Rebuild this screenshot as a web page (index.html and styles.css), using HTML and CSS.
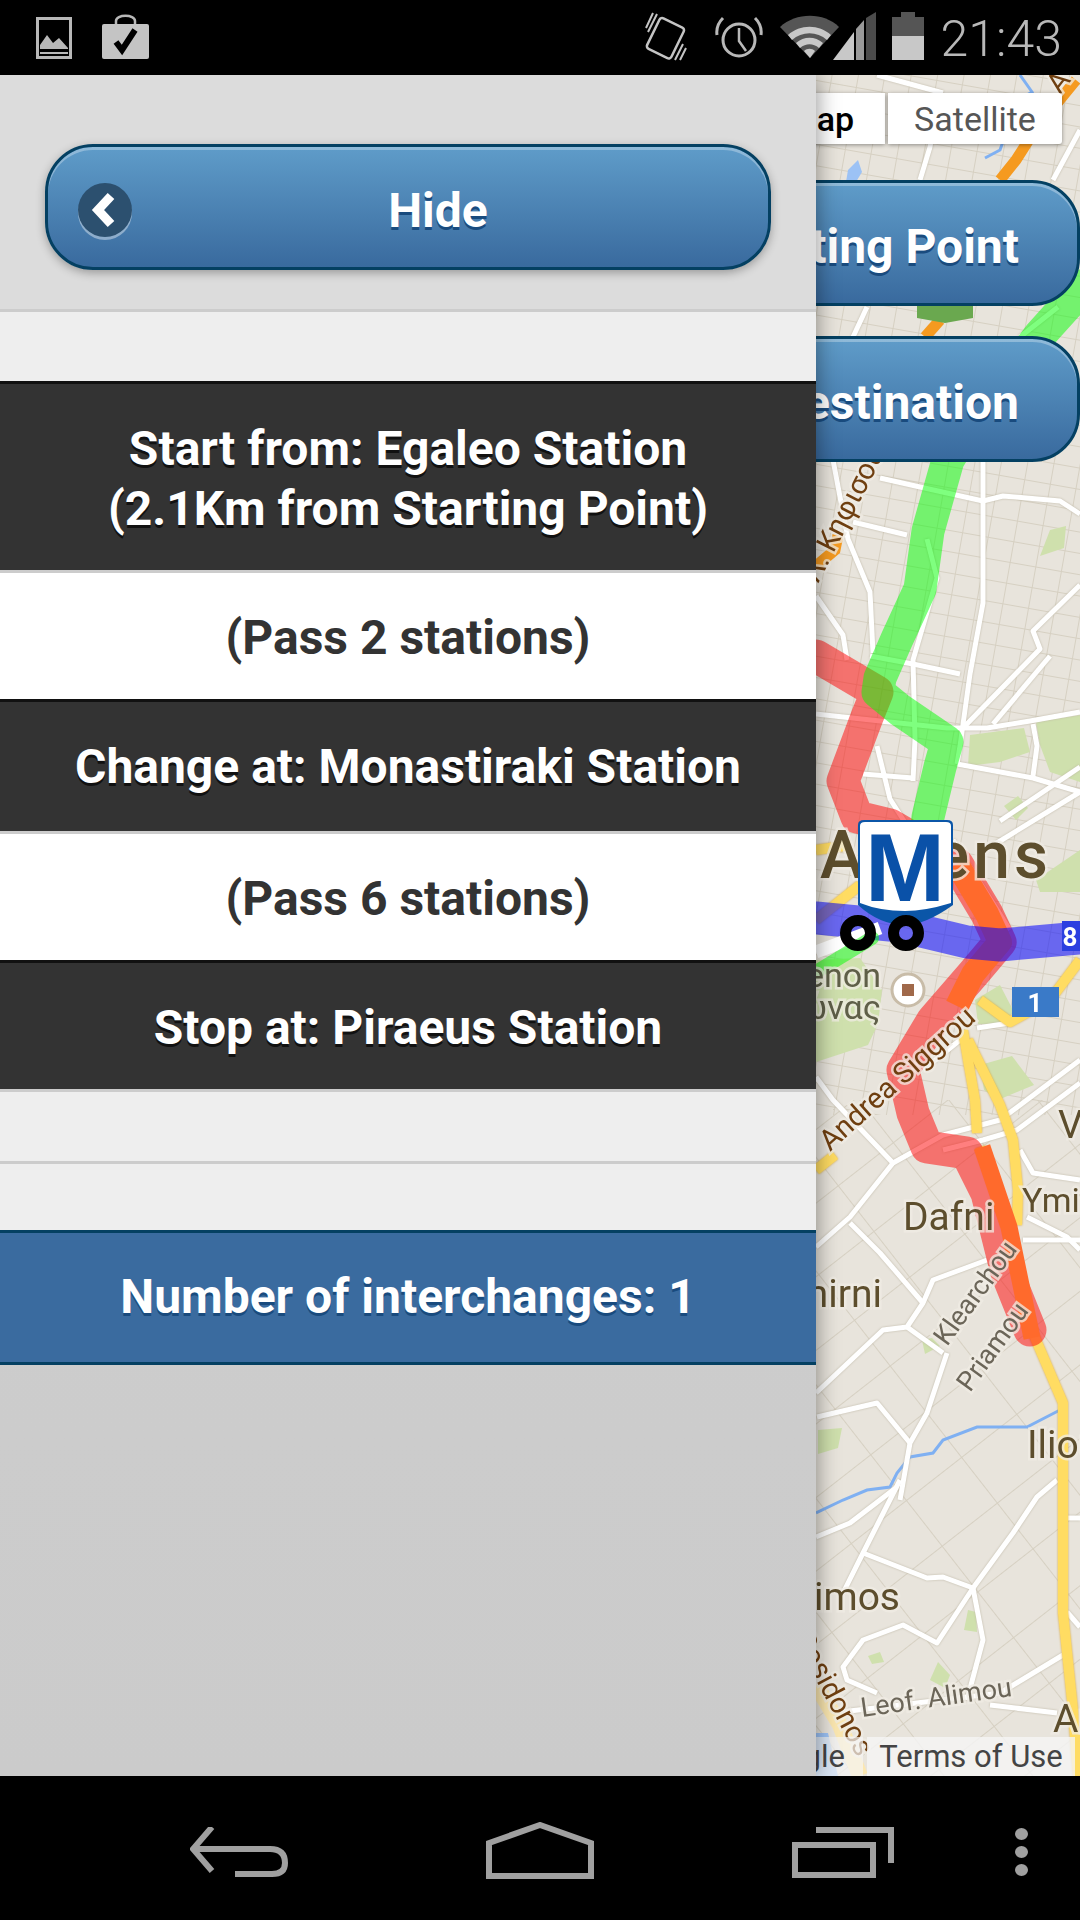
FILE: index.html
```html
<!DOCTYPE html>
<html lang="en">
<head>
    <meta charset="UTF-8">
    <meta name="viewport" content="width=device-width, initial-scale=1.0">
    <title>Metro Route</title>
    <link rel="stylesheet" href="styles.css">
</head>
<body>
    <div class="status-bar">
        <div class="status-left">
            <svg width="36" height="42" viewBox="0 0 36 42"><rect x="1.5" y="1.5" width="33" height="39" fill="none" stroke="#b8b8b8" stroke-width="3"/><rect x="5" y="8" width="26" height="26" fill="#000"/><path d="M4 32V28L11 18L17 26L23 21L32 31V32Z" fill="#b8b8b8"/><rect x="4" y="35" width="28" height="2" fill="#b8b8b8"/></svg>
            <svg width="47" height="46" viewBox="0 0 47 46"><path d="M14 12V8C14 1 33 1 33 8V12" fill="none" stroke="#b8b8b8" stroke-width="2.5"/><rect x="0" y="11" width="47" height="35" rx="2" fill="#c4c4c4"/><path d="M14 29L20 37L33 17" fill="none" stroke="#000" stroke-width="6"/></svg>
        </div>
        <div class="status-right">
            <svg width="42" height="50" viewBox="0 0 42 50"><g fill="none" stroke="#c4c4c4"><rect x="7" y="9" width="27" height="34" rx="3" stroke-width="2.5" transform="rotate(26 20 26)"/><path d="M12 2L3 20M8 1L1 16M30 48L38 32M35 48L41 36" stroke-width="2"/></g></svg>
            <svg width="48" height="46" viewBox="0 0 48 46"><g fill="none" stroke="#b8b8b8"><circle cx="24" cy="25" r="16" stroke-width="3"/><path d="M24 13V26L31 36" stroke-width="2.5"/><path d="M8 3C3 8 1 13 2 20M40 3C45 8 47 13 46 20" stroke-width="3"/></g></svg>
            <svg class="wifi-signal" width="96" height="48" viewBox="0 0 96 48"><path d="M0 15C16 0 44 0 59 15L30 46Z" fill="#555"/><path d="M8 23C20 12 39 12 51 23L47 28C37 19 22 19 12 28Z" fill="#c8c8c8"/><path d="M16 31C24 24 35 24 43 31L39 36C33 31 26 31 20 36Z" fill="#c8c8c8"/><path d="M24 39C27 36 32 36 35 39L30 46Z" fill="#c8c8c8"/><path d="M53 48L74 20V48Z" fill="#c8c8c8"/><path d="M76 17L84 8V48H76Z" fill="#9a9a9a"/><path d="M86 6L96 0V48H86Z" fill="#4c4c4c"/></svg>
            <svg width="32" height="48" viewBox="0 0 32 48"><rect x="9" y="0" width="14" height="6" fill="#555"/><rect x="0" y="5" width="32" height="19" fill="#555"/><rect x="0" y="24" width="32" height="24" fill="#c8c8c8"/></svg>
            <span class="clock">21:43</span>
        </div>
    </div>

    <div class="app">
        <div class="map">
            <svg class="map-canvas" width="264" height="1701" viewBox="816 75 264 1701">
                <defs>
                    <pattern id="streets" width="26" height="21" patternUnits="userSpaceOnUse" patternTransform="rotate(10)">
                        <path d="M0 0H26M0 0V21" fill="none" stroke="#d6d0c2" stroke-width="2"/>
                    </pattern>
                    <pattern id="streetsWide" width="70" height="58" patternUnits="userSpaceOnUse" patternTransform="rotate(-38)">
                        <path d="M0 0H70M0 0V58" fill="none" stroke="#d6d0c2" stroke-width="2"/>
                    </pattern>
                </defs>
                <rect x="816" y="75" width="264" height="1701" fill="#e8e4dc"/>
                <rect x="816" y="75" width="264" height="1040" fill="url(#streets)"/>
                <rect x="816" y="1100" width="264" height="676" fill="url(#streetsWide)"/>

                <!-- parks -->
                <g class="park">
                    <path d="M970 735L1024 728L1030 752L1000 762L968 766Z"/>
                    <path d="M1036 722L1080 715V782L1050 772L1040 745Z"/>
                    <path d="M1004 806L1018 796L1028 808L1016 820Z"/>
                    <path d="M1040 556L1050 530L1066 526L1064 548Z"/>
                    <path d="M1036 880L1080 850V892H1040Z"/>
                    <path d="M816 960L860 958L882 990L878 1024L816 1024Z"/>
                    <path d="M975 1000L1000 985L1014 1012L1000 1024L978 1024Z"/>
                    <path d="M816 1020H880L868 1045L816 1062Z"/>
                    <path d="M980 1065L1012 1056L1034 1085L998 1100L984 1090Z"/>
                    <path d="M818 1430L842 1428L838 1448L818 1454Z"/>
                    <path d="M930 1680L938 1662L950 1675L945 1688Z"/>
                    <path d="M964 1630L968 1610L976 1612L977 1632Z"/>
                    <path d="M868 1656L880 1652L884 1662L872 1664Z"/>
                    <path d="M922 1340L932 1338L940 1346L925 1354Z"/>
                </g>

                <!-- water -->
                <path class="water-blob" d="M846 182L848 170L858 160L862 172L856 182Z"/>
                <path class="water-blob" d="M816 1733H828L838 1776H816Z"/>
                <polyline class="river" points="1060,1410 1027,1427 977,1427 943,1440 933,1453 910,1457 897,1473 890,1487 867,1490 843,1500 816,1513"/>
                <polyline class="river" points="1020,75 1032,92 1018,100 1000,150 985,158"/>

                <!-- roads -->
                <g class="road">
                    <polyline points="877,75 943,93"/>
                    <polyline points="920,180 930,147 940,90"/>
                    <polyline points="1080,130 1053,180"/>
                    <polyline points="867,307 853,337"/>
                    <polyline points="1058,307 1020,337"/>
                    <polyline points="880,478 920,487 983,501 1003,496 1060,501 1080,514"/>
                    <polyline points="983,460 983,603 970,674 960,746 957,764"/>
                    <polyline points="853,522 907,535"/>
                    <polyline points="927,539 937,578 913,660 915,739 913,781"/>
                    <polyline points="833,460 848,539 870,592 873,653"/>
                    <polyline points="816,596 843,635 847,660"/>
                    <polyline points="870,656 913,664 960,674"/>
                    <polyline points="816,714 880,721 947,728 987,728 1030,721 1080,712"/>
                    <polyline points="957,764 1033,778 1080,792"/>
                    <polyline points="963,728 1040,649 1033,631 1080,585"/>
                    <polyline points="993,724 1050,656"/>
                    <polyline points="1033,724 1037,746 1033,776"/>
                    <polyline points="863,774 913,778"/>
                    <polyline points="877,746 890,799 913,835"/>
                    <polyline points="1000,821 1080,767"/>
                    <polyline points="987,849 1080,792"/>
                    <polyline points="953,840 1010,930"/>
                    <polyline points="816,1247 850,1217 893,1163 943,1135 1000,1120 1080,1060"/>
                    <polyline points="943,1150 983,1140 1017,1130 1080,1083"/>
                    <polyline points="850,1223 880,1253 923,1303"/>
                    <polyline points="816,1393 883,1330 907,1327 923,1303 933,1280 987,1260"/>
                    <polyline points="907,1327 943,1353"/>
                    <polyline points="947,1353 927,1413 910,1443 900,1500"/>
                    <polyline points="817,1417 877,1403 910,1443"/>
                    <polyline points="816,1077 833,1100 893,1163"/>
                    <polyline points="1020,1150 1033,1173 1080,1180"/>
                    <polyline points="1023,1240 1080,1240"/>
                    <polyline points="1027,1217 1067,1237 1080,1250"/>
                    <polyline points="977,1028 1010,1023"/>
                    <polyline points="960,1040 923,1070"/>
                    <polyline points="816,1537 850,1523 897,1487"/>
                    <polyline points="900,1480 863,1553 843,1593"/>
                    <polyline points="863,1553 927,1578 943,1577 973,1588"/>
                    <polyline points="1057,1480 1037,1497 1013,1533 973,1588 937,1643 903,1625 863,1640 843,1667 847,1680 877,1693"/>
                    <polyline points="973,1588 983,1640 967,1700"/>
                    <polyline points="833,1713 1000,1693 1063,1655"/>
                    <polyline points="990,1705 1057,1713"/>
                    <polyline points="1067,1612 1080,1627"/>
                    <polyline points="1067,1518 1080,1518"/>
                </g>

                <!-- highways -->
                <polyline class="coast-road" points="816,1685 840,1725 860,1776"/>
                <g class="highway-orange">
                    <polyline points="1000,180 1016,160 1035,130 1076,80"/>
                    <polyline points="925,337 940,320"/>
                    <polyline points="816,566 835,550 838,535"/>
                </g>
                <g class="highway-yellow">
                    <polyline points="816,850 850,845"/>
                    <polyline points="816,920 860,885"/>
                    <polyline points="980,1000 1010,1022 1050,1000 1080,960"/>
                    <polyline points="963,1030 968,1060 975,1100 977,1133"/>
                    <polyline points="968,1040 1000,1105 1013,1140 1018,1190 1017,1225"/>
                    <polyline points="980,1147 1007,1227 1033,1333 1063,1403 1063,1613 1073,1710 1078,1776"/>
                    <polyline points="816,1170 835,1155"/>
                </g>
                <path class="shield" d="M917 305H973V318L945 323L917 318Z"/>

                <!-- routes -->
                <polyline class="route route-red" points="816,656 877,692 867,717 843,781 857,817 890,825 957,864 987,914 1000,942 973,974 933,1020 903,1070 913,1113 927,1147 967,1153 987,1193 1007,1273 1030,1330"/>
                <polyline class="route-orange" points="957,864 987,914 1000,942 973,974 957,1006"/>
                <polyline class="route-orange route-orange-thin" points="982,1147 1009,1227 1032,1338"/>
                <polyline class="route route-blue" points="816,918 900,926 967,942 1000,945 1080,938"/>
                <polyline class="side-road" points="816,952 880,928"/>
                <polyline class="route route-green" points="1085,285 1040,335 960,440 948,460 928,531 920,589 897,639 880,678 878,692 900,710 947,742 940,767 928,817 925,850"/>
                <polyline class="route route-green-thin" points="816,972 872,938"/>

                <!-- labels -->
                <text class="label label-city" x="820" y="878">Athens</text>
                <text class="label label-town" x="903" y="1230">Dafni</text>
                <text class="label label-town label-narrow" x="1022" y="1212">Ymittos</text>
                <text class="label label-town" x="1058" y="1138">Vyronas</text>
                <text class="label label-town label-end" x="882" y="1307">Smirni</text>
                <text class="label label-town" x="1027" y="1458">Ilioupoli</text>
                <text class="label label-town label-end" x="900" y="1610">Alimos</text>
                <text class="label label-town" x="1053" y="1732">Argyroupoli</text>
                <text class="label label-suburb label-end" x="881" y="987">Parthenon</text>
                <text class="label label-suburb label-end" x="881" y="1019">Παρθενώνας</text>
                <text class="label label-street" transform="translate(862 1717) rotate(-8)">Leof. Alimou</text>
                <text class="label label-street" transform="translate(947 1347) rotate(-54)">Klearchou</text>
                <text class="label label-street" transform="translate(970 1393) rotate(-54)">Priamou</text>
                <text class="label label-road" transform="translate(830 1152) rotate(-42)">Andrea Siggrou</text>
                <text class="label label-road" transform="translate(818 584) rotate(-63)">Λ. Κηφισού</text>
                <text class="label label-road" transform="translate(1030 135) rotate(-52)">A</text>
                <text class="label label-road" transform="translate(1060 95) rotate(-52)">A</text>
                <text class="label label-road" transform="translate(793 1637) rotate(62)">Posidonos</text>

                <!-- highway signs and POI -->
                <rect x="1012" y="987" width="47" height="30" fill="#3a7ac8"/>
                <text class="sign-text" x="1035" y="1012">1</text>
                <rect x="1062" y="921" width="18" height="30" fill="#2c3fe0"/>
                <text class="sign-text" x="1070" y="946">8</text>
                <circle cx="908" cy="990" r="16" fill="#fff" stroke="#c8bca8" stroke-width="3"/>
                <rect x="902" y="984" width="12" height="12" fill="#a0694a"/>

                <!-- metro marker -->
                <g>
                    <path d="M858 905V825Q858 820 864 820H947Q953 820 953 825V905Q925 925 905 925Q880 925 858 905Z" fill="#0b56a8"/>
                    <path d="M860 903V826Q860 822 865 822H946Q951 822 951 826V903Q925 911 905 911Q880 911 860 903Z" fill="#fff"/>
                    <text class="marker-letter" x="905" y="901">M</text>
                    <circle cx="858" cy="933" r="12.5" class="marker-wheel"/>
                    <circle cx="906" cy="933" r="12.5" class="marker-wheel"/>
                </g>
            </svg>

            <div class="map-types">
                <div class="map-type map-type-active">Map</div>
                <div class="map-type">Satellite</div>
            </div>

            <div class="map-button map-button-start">Starting Point</div>
            <div class="map-button map-button-dest">Destination</div>

            <div class="map-footer">
                <span class="map-google">Google</span>
                <span class="map-terms">Terms of Use</span>
            </div>
        </div>

        <div class="panel">
            <div class="panel-header">
                <div class="hide-button">
                    <span class="hide-icon">
                        <svg width="30" height="36" viewBox="0 0 30 36"><path d="M21 4L8 18L21 32" fill="none" stroke="#fff" stroke-width="9"/></svg>
                    </span>
                    <span class="button-label">Hide</span>
                </div>
            </div>
            <div class="spacer spacer-top"></div>
            <div class="row row-dark row-first">Start from: Egaleo Station<br>(2.1Km from Starting Point)</div>
            <div class="row row-light">(Pass 2 stations)</div>
            <div class="row row-dark row-tall">Change at: Monastiraki Station</div>
            <div class="row row-light">(Pass 6 stations)</div>
            <div class="row row-dark">Stop at: Piraeus Station</div>
            <div class="spacer spacer-line"></div>
            <div class="spacer"></div>
            <div class="row row-blue">Number of interchanges: 1</div>
        </div>
    </div>

    <div class="nav-bar">
        <svg class="nav-back" width="100" height="50" viewBox="0 0 100 50"><path d="M22 0L3 22L22 44M3 22H80Q95 22 95 36Q95 47 82 47H45" fill="none" stroke="#a0a0a0" stroke-width="6"/></svg>
        <svg class="nav-home" width="108" height="58" viewBox="0 0 108 58"><path d="M3 54V21L54 3L105 21V54Z" fill="none" stroke="#a0a0a0" stroke-width="6"/></svg>
        <svg class="nav-recent" width="102" height="51" viewBox="0 0 102 51"><rect x="3" y="18" width="78" height="30" fill="none" stroke="#a0a0a0" stroke-width="6"/><path d="M24 3H99V36" fill="none" stroke="#a0a0a0" stroke-width="6"/></svg>
        <svg class="nav-menu" width="13" height="48" viewBox="0 0 13 48"><ellipse cx="6.5" cy="6" rx="6.5" ry="6" fill="#a0a0a0"/><ellipse cx="6.5" cy="24" rx="6.5" ry="6" fill="#a0a0a0"/><ellipse cx="6.5" cy="42" rx="6.5" ry="6" fill="#a0a0a0"/></svg>
    </div>
</body>
</html>
```
FILE: styles.css
```css
* {
    box-sizing: border-box;
}
html, body {
    margin: 0;
    padding: 0;
}
body {
    width: 1080px;
    height: 1920px;
    overflow: hidden;
    display: flex;
    flex-direction: column;
    background: #000;
    font-family: Roboto, "Liberation Sans", sans-serif;
}

/* status bar */
.status-bar {
    height: 75px;
    flex: none;
    display: flex;
    justify-content: space-between;
    align-items: flex-start;
    background: #000;
}
.status-left {
    display: flex;
    gap: 30px;
    padding: 13px 0 0 36px;
    align-items: flex-end;
}
.status-right {
    display: flex;
    align-items: flex-start;
    padding: 12px 18px 0 0;
}
.status-right svg:nth-child(2) {
    margin: 3px 0 0 28px;
}
.status-right .wifi-signal {
    margin: 0 0 0 17px;
}
.status-right svg:nth-child(4) {
    margin: 0 0 0 16px;
}
.clock {
    margin-left: 17px;
    font-size: 50px;
    font-weight: 300;
    line-height: 54px;
    color: #b8b8b8;
}

/* app area */
.app {
    position: relative;
    flex: 1;
    display: flex;
    background: #e8e4dc;
    overflow: hidden;
}
.panel {
    position: relative;
    z-index: 2;
    width: 816px;
    display: flex;
    flex-direction: column;
    background: linear-gradient(#d0d0d0, #cbcbcb);
    box-shadow: 0 0 22px rgba(0, 0, 0, 0.45);
}
.panel-header {
    height: 237px;
    padding: 69px 45px 0;
    background: #dcdcdc;
    border-bottom: 3px solid #ccc;
}
.hide-button {
    position: relative;
    height: 126px;
    padding-left: 60px;
    display: flex;
    align-items: center;
    justify-content: center;
    color: #fff;
    font-size: 48px;
    font-weight: 700;
    text-shadow: 0 3px 0 #194b7e;
    background: linear-gradient(#5f9cc9, #396a9e);
    border: 3px solid #044062;
    border-radius: 48px;
    box-shadow: inset 0 3px 0 rgba(255, 255, 255, 0.3), 0 3px 10px rgba(0, 0, 0, 0.3);
}
.button-label {
    padding-top: 6px;
}
.hide-icon {
    position: absolute;
    left: 30px;
    top: 36px;
    width: 54px;
    height: 54px;
    display: flex;
    align-items: center;
    justify-content: center;
    border-radius: 50%;
    background: #2c506f;
    box-shadow: 0 3px 0 rgba(255, 255, 255, 0.4);
}

.spacer {
    height: 66px;
    background: #eee;
}
.spacer-top {
    height: 69px;
}
.spacer-line {
    height: 72px;
    border-bottom: 3px solid #ccc;
}
.row {
    padding: 35px 20px 31px;
    text-align: center;
    font-size: 48px;
    font-weight: 700;
    line-height: 60px;
}
.row-dark {
    color: #fff;
    background: #333;
    border-top: 3px solid #111;
    border-bottom: 3px solid #ccc;
    text-shadow: 0 3px 0 #111;
}
.row-tall {
    padding-bottom: 34px;
}
.row-light {
    color: #333;
    background: #fff;
    text-shadow: 0 3px 0 #fff;
}
.row-blue {
    padding: 34px 20px 35px;
    color: #fff;
    background: #3a6b9f;
    border-top: 3px solid #044062;
    border-bottom: 3px solid #044062;
    text-shadow: 0 3px 0 #194b7e;
}

/* map */
.map {
    position: absolute;
    top: 0;
    right: 0;
    bottom: 0;
    width: 264px;
}
.map-canvas {
    display: block;
    filter: blur(0.5px);
}
.park {
    fill: #cfe0ad;
}
.water-blob {
    fill: #9cc2f5;
}
.river {
    fill: none;
    stroke: #7fb0f2;
    stroke-width: 3;
}
.road polyline {
    fill: none;
    stroke: #fff;
    stroke-width: 5;
    stroke-linejoin: round;
}
.road {
    filter: drop-shadow(0 0 1px #bdb6a4);
}
.side-road {
    fill: none;
    stroke: #fff;
    stroke-width: 13;
}
.coast-road {
    fill: none;
    stroke: #fbe7b0;
    stroke-width: 16;
}
.highway-orange polyline {
    fill: none;
    stroke: #f59a20;
    stroke-width: 11;
}
.highway-yellow polyline {
    fill: none;
    stroke: #ffdc62;
    stroke-width: 10;
    stroke-linejoin: round;
}
.highway-yellow {
    filter: drop-shadow(0 0 1px #d8a840);
}
.shield {
    fill: #6aa84f;
}
.route {
    fill: none;
    stroke-width: 33;
    stroke-linejoin: round;
    stroke-linecap: round;
}
.route-green {
    stroke: rgba(0, 255, 0, 0.5);
}
.route-green-thin {
    stroke: rgba(0, 255, 0, 0.5);
    stroke-width: 14;
}
.route-red {
    stroke: rgba(255, 0, 0, 0.5);
}
.route-blue {
    stroke: rgba(0, 0, 255, 0.55);
}
.route-orange {
    fill: none;
    stroke: #ff6a2c;
    stroke-width: 24;
    stroke-linejoin: round;
}
.route-orange-thin {
    stroke-width: 17;
}
.label {
    font-family: Roboto, "Liberation Sans", sans-serif;
    paint-order: stroke;
    stroke: rgba(240, 236, 228, 0.75);
    stroke-width: 5px;
}
.label-end {
    text-anchor: end;
}
.label-city {
    font-size: 66px;
    font-weight: 500;
    letter-spacing: 4px;
    fill: #5d4e2d;
}
.label-town {
    font-size: 39px;
    fill: #5d4e2d;
}
.label-narrow {
    font-size: 34px;
}
.label-suburb {
    font-size: 34px;
    fill: #5f5f48;
}
.label-street {
    font-size: 27px;
    fill: #6b6558;
}
.label-road {
    font-size: 29px;
    fill: #6f3f10;
}
.sign-text {
    font-family: Roboto, sans-serif;
    font-size: 26px;
    font-weight: 700;
    fill: #fff;
    text-anchor: middle;
}
.marker-letter {
    font-family: "Liberation Sans", sans-serif;
    font-size: 96px;
    font-weight: 700;
    fill: #0a51a8;
    text-anchor: middle;
}
.marker-wheel {
    fill: none;
    stroke: #000;
    stroke-width: 11;
}

.map-types {
    position: absolute;
    top: 18px;
    left: -60px;
    display: flex;
    gap: 3px;
    font-size: 34px;
}
.map-type {
    width: 174px;
    height: 51px;
    display: flex;
    align-items: center;
    justify-content: center;
    color: #565656;
    background: #fff;
    border-radius: 0 3px 3px 0;
    box-shadow: 0 1px 4px rgba(0, 0, 0, 0.4);
}
.map-type-active {
    width: 129px;
    color: #000;
    font-weight: 500;
    border-radius: 3px 0 0 3px;
}
.map-button {
    position: absolute;
    left: -200px;
    right: 0;
    height: 126px;
    padding: 6px 58px 0 0;
    display: flex;
    align-items: center;
    justify-content: flex-end;
    color: #fff;
    font-size: 48px;
    font-weight: 700;
    text-shadow: 0 3px 0 #194b7e;
    background: linear-gradient(#5f9cc9, #396a9e);
    border: 3px solid #044062;
    border-radius: 48px;
    box-shadow: inset 0 3px 0 rgba(255, 255, 255, 0.3);
}
.map-button-start {
    top: 105px;
}
.map-button-dest {
    top: 261px;
}
.map-footer {
    position: absolute;
    left: -20px;
    right: 5px;
    bottom: 0;
    height: 39px;
    display: flex;
    justify-content: space-between;
    font-size: 31px;
    line-height: 39px;
    color: #444;
}
.map-google {
    width: 67px;
    padding-right: 18px;
    white-space: nowrap;
    direction: rtl;
    background: rgba(245, 245, 245, 0.7);
}
.map-terms {
    flex: 1;
    margin-left: 4px;
    text-align: center;
    background: rgba(245, 245, 245, 0.8);
}

/* nav bar */
.nav-bar {
    position: relative;
    height: 144px;
    flex: none;
    background: #000;
}
.nav-bar svg {
    position: absolute;
}
.nav-back {
    left: 190px;
    top: 51px;
}
.nav-home {
    left: 486px;
    top: 46px;
}
.nav-recent {
    left: 792px;
    top: 51px;
}
.nav-menu {
    left: 1015px;
    top: 52px;
}
```
